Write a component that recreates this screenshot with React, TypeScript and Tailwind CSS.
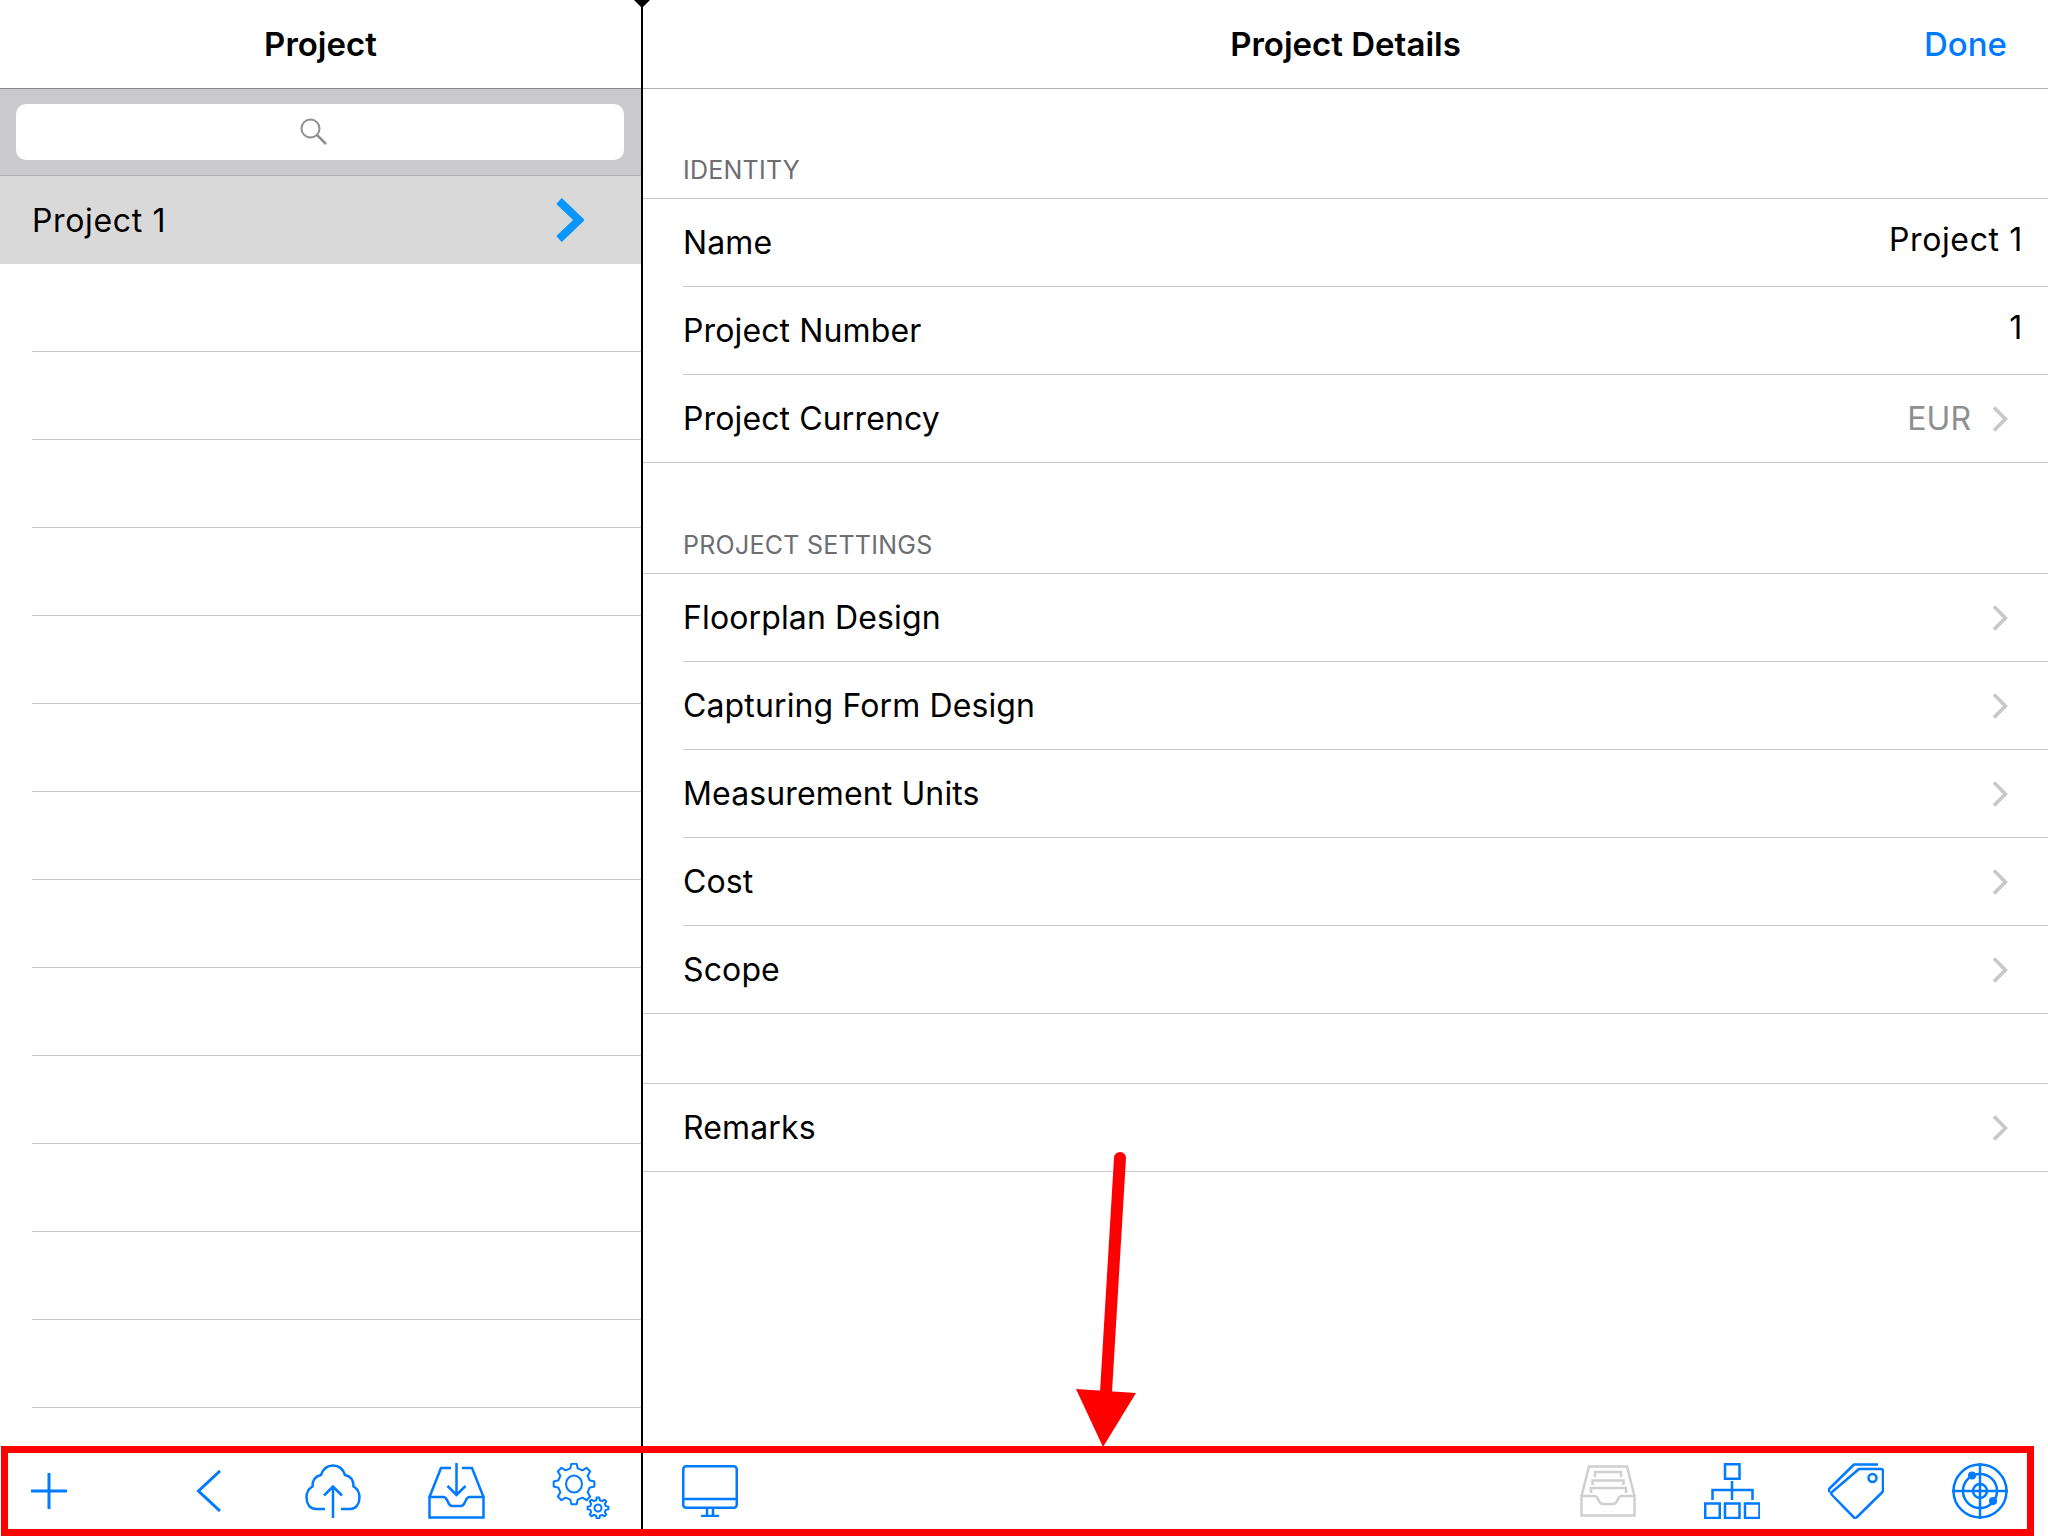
const BLUE = "#007aff";

const font = { fontFamily: "Inter, 'Liberation Sans', sans-serif" };

function gearPath(cx: number, cy: number, outer: number, inner: number, teeth: number) {
  const pts: string[] = [];
  const step = (Math.PI * 2) / teeth;
  for (let i = 0; i < teeth; i++) {
    const a = i * step - Math.PI / 2;
    const list: [number, number][] = [
      [inner, a - step * 0.3],
      [outer, a - step * 0.16],
      [outer, a + step * 0.16],
      [inner, a + step * 0.3],
    ];
    for (const [r, t] of list) {
      pts.push(`${(cx + r * Math.cos(t)).toFixed(2)} ${(cy + r * Math.sin(t)).toFixed(2)}`);
    }
  }
  return `M${pts.join("L")}Z`;
}

function Chevron() {
  return (
    <svg width="16" height="26" viewBox="0 0 16 26" fill="none" className="shrink-0">
      <path d="M2 1.5L13.5 13L2 24.5" stroke="#c7c7cc" strokeWidth="3.6" />
    </svg>
  );
}

function PlusIcon() {
  return (
    <svg width="36" height="36" viewBox="0 0 36 36" fill="none" stroke={BLUE} strokeWidth="3">
      <path d="M18 0V36M0 18H36" />
    </svg>
  );
}

function BackIcon() {
  return (
    <svg width="26" height="42" viewBox="0 0 26 42" fill="none" stroke={BLUE} strokeWidth="3">
      <path d="M24 1L2.5 21L24 41" />
    </svg>
  );
}

function CloudIcon() {
  return (
    <svg width="56" height="54" viewBox="0 0 56 54" fill="none" stroke={BLUE} strokeWidth="2.5">
      <path d="M20 45H11C5 45 1.5 40 1.5 33.5C1.5 28 4 24.5 7.5 22.5C7.5 16 11 12 16 11C18 5 22.5 1.5 28 1.5C33.5 1.5 38 5 40 11C45 12 48.5 16 48.5 22.5C52 24.5 54.5 28 54.5 33.5C54.5 40 51 45 45 45H36" />
      <path d="M28 54V23M19 31.5L28 22.5L37 31.5" />
    </svg>
  );
}

function InboxIcon() {
  return (
    <svg width="57" height="56" viewBox="0 0 57 56" fill="none" stroke={BLUE} strokeWidth="2.5">
      <path d="M1.5 34H15.5C17 34 18 35 19 37L21 41C22 42.5 23 43 24 43H33C34 43 35 42.5 36 41L38 37C39 35 40 34 41.5 34H55.5V54.5H1.5Z" />
      <path d="M1.5 34L13 5H23M34 5H44L55.5 34" />
      <path d="M28.5 0V32M19.5 23L28.5 32L37.5 23" />
    </svg>
  );
}

function GearsIcon() {
  return (
    <svg width="58" height="56" viewBox="0 0 58 56" fill="none" stroke={BLUE} strokeWidth="2">
      <path d={gearPath(22, 21, 20.5, 16, 8)} strokeLinejoin="round" />
      <ellipse cx="22" cy="21" rx="8" ry="8.5" />
      <path d={gearPath(46, 45, 10.5, 8, 8)} strokeLinejoin="round" />
      <circle cx="46" cy="45" r="3.5" />
    </svg>
  );
}

function MonitorIcon() {
  return (
    <svg width="56" height="52" viewBox="0 0 56 52" fill="none" stroke={BLUE} strokeWidth="2.5">
      <rect x="1.25" y="1.25" width="53.5" height="41.5" rx="3" />
      <path d="M1 34H55M25 43V51M31 43V51M19 51H37" />
    </svg>
  );
}

function DrawerIcon() {
  return (
    <svg width="56" height="52" viewBox="0 0 56 52" fill="none" stroke="#cfcfcf" strokeWidth="2.5">
      <path d="M1.5 31H14.5C16 31 17 32 18 34C19.5 38 21 39 23 39H33C35 39 36.5 38 38 34C39 32 40 31 41.5 31H54.5V50.5H1.5Z" />
      <path d="M1.5 31L9 1.5H47L54.5 31" />
      <path d="M15 12V7H41V12M12.5 20V15.5H43.5V20M11 28V23H46V28" />
    </svg>
  );
}

function HierarchyIcon() {
  return (
    <svg width="56" height="56" viewBox="0 0 56 56" fill="none" stroke={BLUE} strokeWidth="2.5">
      <rect x="21" y="1.25" width="14.5" height="14.5" />
      <rect x="1.25" y="40.5" width="14.5" height="14.5" />
      <rect x="21" y="40.5" width="14.5" height="14.5" />
      <rect x="41" y="40.5" width="14.5" height="14.5" />
      <path d="M28 18V37M8.5 37V27H48.5V37" />
    </svg>
  );
}

function TagIcon() {
  return (
    <svg width="56" height="56" viewBox="0 0 56 56" fill="none" stroke={BLUE} strokeWidth="2.5" strokeLinejoin="round">
      <path d="M31 6H53C54.5 6 55 7 55 8V27C55 28 54.5 29 54 29.5L28.5 54.5C27.5 55 26.5 55 26 54.5L4 32C3 31 3 30 4 29Z" />
      <path d="M50 1.5H26L1.5 25.5C0.5 26.5 0.5 28 2 29" />
      <circle cx="44.5" cy="15" r="4" />
    </svg>
  );
}

function RadarIcon() {
  return (
    <svg width="56" height="56" viewBox="0 0 56 56" fill="none" stroke={BLUE} strokeWidth="2.5">
      <circle cx="28" cy="28" r="26.5" />
      <circle cx="28" cy="28" r="17" />
      <circle cx="28" cy="28" r="7" />
      <path d="M28 0V56M0 28H56" />
      <circle cx="20" cy="12.5" r="4" fill={BLUE} stroke="none" />
      <circle cx="41" cy="38" r="4" fill={BLUE} stroke="none" />
    </svg>
  );
}

function DetailRow({ label, value, grey, chevron, last }: { label: string; value?: string; grey?: boolean; chevron?: boolean; last?: boolean }) {
  return (
    <div className={`flex h-[88px] items-center justify-between border-b border-[#c8c7cc] ${last ? "pl-[40px]" : "ml-[40px]"} ${chevron ? "pr-[40px]" : "pr-[25px]"}`}>
      <span className="text-[32px] tracking-[0.004em] text-black">{label}</span>
      {value && !chevron && <span className="pb-[6px] text-[32px] tracking-[0.02em] text-black">{value}</span>}
      {chevron && (
        <div className="flex items-center gap-[21px]">
          {value && <span className={`text-[32px] ${grey ? "text-[#8e8e93]" : "text-black"}`}>{value}</span>}
          <Chevron />
        </div>
      )}
    </div>
  );
}

function SectionLabel({ text, height }: { text: string; height: string }) {
  return (
    <div className={`flex items-end border-b border-[#c8c7cc] pb-[12px] pl-[40px] ${height}`}>
      <span className="text-[25px] leading-[32px] tracking-[0.01em] text-[#6d6d72]">{text}</span>
    </div>
  );
}

export default function App() {
  const blankRows = Array.from({ length: 13 });

  return (
    <div className="relative flex h-[1536px] w-[2048px] overflow-hidden bg-white" style={font}>
      <aside className="flex h-full w-[641px] flex-col">
        <div className="flex h-[89px] shrink-0 items-center justify-center border-b border-[#8a8a8a] pt-[2px] text-[33px] font-semibold text-black">
          Project
        </div>
        <div className="flex h-[87px] shrink-0 items-center border-b border-[#b0b0b4] bg-[#c9c9ce] pb-[1px] pl-[16px] pr-[17px]">
          <div className="flex h-[56px] w-full items-center justify-center rounded-[10px] bg-white pr-[14px]">
            <svg width="27" height="27" viewBox="0 0 27 27" fill="none" stroke="#8e8e93" strokeWidth="2">
              <circle cx="10.5" cy="10.5" r="9" />
              <path d="M17 17L26 26" strokeWidth="2.5" />
            </svg>
          </div>
        </div>
        <div className="flex h-[88px] shrink-0 items-center justify-between bg-[#d9d9d9] pl-[32px] pr-[57px]">
          <span className="pt-[2px] text-[32px] tracking-[0.02em] text-black">Project 1</span>
          <svg width="28" height="44" viewBox="0 0 28 44" fill="none" stroke="#0a96ff" strokeWidth="8">
            <path d="M3 3L23 22L3 41" />
          </svg>
        </div>
        {blankRows.map((_, i) => (
          <div key={i} className="ml-[32px] h-[88px] shrink-0 border-b border-[#c8c7cc]" />
        ))}
        <div className="mt-auto flex h-[90px] shrink-0 items-center pl-[31px]">
          <PlusIcon />
          <div className="ml-[129px]">
            <BackIcon />
          </div>
          <div className="ml-[83px] flex items-center gap-[67px]">
            <CloudIcon />
            <InboxIcon />
            <GearsIcon />
          </div>
        </div>
      </aside>

      <div className="h-full w-[2px] shrink-0 bg-black" />

      <main className="flex h-full min-w-0 flex-1 flex-col">
        <div className="grid h-[89px] shrink-0 grid-cols-[1fr_auto_1fr] items-center border-b border-[#b2b2b2] pt-[2px]">
          <span />
          <span className="text-[33px] font-semibold text-black">Project Details</span>
          <span className="justify-self-end pr-[41px] text-[33px] font-medium text-[#007aff]">Done</span>
        </div>

        <SectionLabel text="IDENTITY" height="h-[110px]" />
        <DetailRow label="Name" value="Project 1" />
        <DetailRow label="Project Number" value="1" />
        <DetailRow label="Project Currency" value="EUR" grey chevron last />

        <SectionLabel text="PROJECT SETTINGS" height="h-[111px]" />
        <DetailRow label="Floorplan Design" chevron />
        <DetailRow label="Capturing Form Design" chevron />
        <DetailRow label="Measurement Units" chevron />
        <DetailRow label="Cost" chevron />
        <DetailRow label="Scope" chevron last />

        <div className="h-[70px] shrink-0 border-b border-[#c8c7cc]" />
        <DetailRow label="Remarks" chevron last />

        <div className="mt-auto flex h-[90px] shrink-0 items-center justify-between pl-[39px] pr-[40px]">
          <MonitorIcon />
          <div className="flex items-center gap-[68px]">
            <DrawerIcon />
            <HierarchyIcon />
            <TagIcon />
            <RadarIcon />
          </div>
        </div>
      </main>

      {/* notch at the top of the pane divider */}
      <div className="absolute left-[634px] top-0 h-0 w-0 border-x-[8px] border-t-[8px] border-x-transparent border-t-black" />

      {/* red annotation over the toolbar */}
      <div className="absolute left-[1px] top-[1446px] h-[90px] w-[2033px] border-[7px] border-[#ff0000]" />
      <svg className="absolute left-[1060px] top-[1150px]" width="90" height="300" viewBox="0 0 90 300" fill="none">
        <path d="M60 8L46 242" stroke="#ff0000" strokeWidth="12" strokeLinecap="round" />
        <path d="M16 239L76 243L43 297Z" fill="#ff0000" />
      </svg>
    </div>
  );
}
